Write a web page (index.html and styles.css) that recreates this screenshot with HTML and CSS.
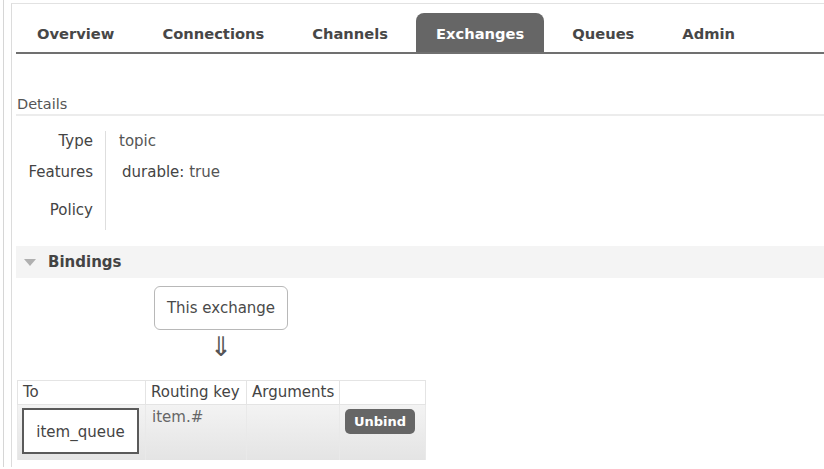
FILE: index.html
```html
<!DOCTYPE html>
<html>
<head>
<meta charset="utf-8">
<link rel="stylesheet" href="styles.css">
</head>
<body>
<div class="outer">
  <div class="frame">
    <nav class="tabs">
      <span class="tab">Overview</span>
      <span class="tab">Connections</span>
      <span class="tab">Channels</span>
      <span class="tab active">Exchanges</span>
      <span class="tab">Queues</span>
      <span class="tab">Admin</span>
    </nav>

    <h2 class="section-title">Details</h2>
    <div class="facts">
      <div class="label r1">Type</div><div class="value r1">topic</div>
      <div class="label r2">Features</div><div class="value r2 shift">durable: <span class="muted">true</span></div>
      <div class="label r3">Policy</div><div class="value r3"></div>
    </div>

    <div class="band">
      <span class="tri"></span>
      <span class="band-title">Bindings</span>
    </div>

    <div class="source">This exchange</div>
    <div class="arrow">⇓</div>

    <table class="bindings">
      <thead>
        <tr>
          <th class="c1">To</th>
          <th class="c2">Routing key</th>
          <th class="c3">Arguments</th>
          <th class="c4"></th>
        </tr>
      </thead>
      <tbody>
        <tr>
          <td class="c1"><div class="queue">item_queue</div></td>
          <td class="c2 key">item.#</td>
          <td class="c3"></td>
          <td class="c4"><span class="btn">Unbind</span></td>
        </tr>
      </tbody>
    </table>
  </div>
</div>
</body>
</html>
```

FILE: styles.css
```css
html, body {
  margin: 0;
  padding: 0;
  background: #fff;
  overflow: hidden;
}
body {
  font-family: "DejaVu Sans", Verdana, sans-serif;
  color: #484848;
  font-size: 15px;
}
.outer {
  margin-left: 3px;
  border-left: 1px solid #d6d6d6;
  padding-left: 7px;
  padding-top: 3px;
  height: 467px;
  box-sizing: border-box;
}
.frame {
  width: 840px;
  height: 465px;
  box-sizing: border-box;
  border-top: 1px solid #e2e2e2;
  border-left: 1px solid #dcdcdc;
  border-bottom: 1px solid #e2e2e2;
  padding-left: 4px;
}
.tabs {
  display: flex;
  gap: 8px;
  margin-top: 9px;
  padding-left: 1px;
  border-bottom: 2px solid #707070;
}
.tab {
  padding: 0 20px;
  height: 39px;
  line-height: 41px;
  font-weight: bold;
  font-size: 14.7px;
  color: #474747;
}
.tab.active {
  background: #666;
  color: #fff;
  border-radius: 8px 8px 0 0;
}
.section-title {
  margin: 40px 0 0;
  font-size: 14.5px;
  font-weight: normal;
  line-height: 20px;
  color: #555;
  padding-left: 1px;
  border-bottom: 2px solid #ececec;
}
.facts {
  display: grid;
  grid-template-columns: 90px auto;
  margin-top: 15px;
  line-height: 20px;
}
.label {
  text-align: right;
  padding-right: 12px;
  border-right: 1px solid #dedede;
  color: #444;
}
.value {
  padding-left: 13px;
  color: #555;
}
.value.shift { padding-left: 16px; color: #444; }
.muted { color: #555; }
.r2 { padding-top: 11px; }
.r3 { padding-top: 18px; padding-bottom: 10px; }
.band {
  margin-top: 16px;
  height: 32px;
  background: #f4f4f4;
  display: flex;
  align-items: center;
  padding-left: 8px;
}
.tri {
  width: 0;
  height: 0;
  border-left: 6px solid transparent;
  border-right: 6px solid transparent;
  border-top: 7px solid #b0b0b0;
  margin-right: 12px;
}
.band-title {
  font-weight: bold;
  font-size: 15px;
  color: #444;
}
.source {
  margin: 8px 0 0 138px;
  width: 134px;
  height: 44px;
  box-sizing: border-box;
  border: 1px solid #b8b8b8;
  border-radius: 6px;
  text-align: center;
  line-height: 42px;
  color: #4a4a4a;
}
.arrow {
  margin-left: 138px;
  width: 134px;
  text-align: center;
  padding-top: 3px;
  line-height: 28px;
  height: 28px;
  margin-bottom: 19px;
  font-size: 27px;
  color: #555;
}
.bindings {
  margin-left: 1px;
  border-collapse: collapse;
  table-layout: fixed;
  width: 408px;
}
.bindings th, .bindings td {
  padding: 0;
  text-align: left;
  font-weight: normal;
  box-sizing: border-box;
}
.bindings th {
  height: 24px;
  line-height: 23px;
  padding-left: 5px;
  border: 1px solid #e4e4e4;
  background: #fff;
  color: #444;
}
.c1 { width: 128px; }
.c2 { width: 101px; }
.c3 { width: 93px; }
.c4 { width: 86px; }
.bindings tbody tr {
  background: linear-gradient(#f3f3f3, #e4e4e4);
}
.bindings td {
  height: 55px;
  vertical-align: top;
  border-left: 1px solid #e9e9e9;
  border-right: 1px solid #e9e9e9;
}
.bindings td.c2, .bindings td.c3, .bindings td.c4 { border-left-color: #f8f8f8; }
.queue {
  margin: 3px 0 0 4px;
  width: 117px;
  height: 46px;
  box-sizing: border-box;
  border: 2px solid #5a5a5a;
  background: #fff;
  text-align: center;
  line-height: 44px;
  color: #444;
}
.key {
  padding: 3px 0 0 6px !important;
  line-height: 18px;
  color: #666;
}
.btn {
  display: inline-block;
  margin: 4px 0 0 5px;
  width: 70px;
  height: 25px;
  line-height: 25px;
  background: #666;
  color: #fff;
  font-weight: bold;
  font-size: 13px;
  text-align: center;
  border-radius: 5px;
}
```
